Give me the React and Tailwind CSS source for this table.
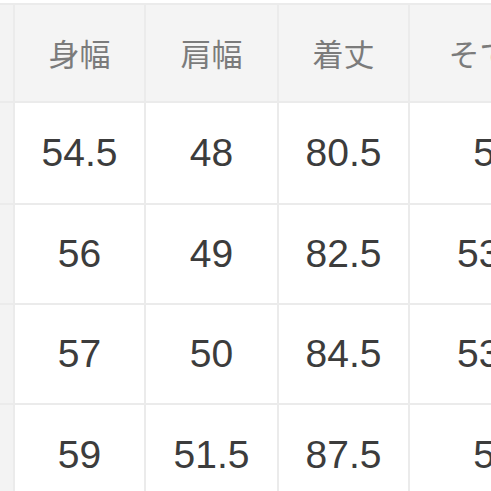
const headers = ['身幅', '肩幅', '着丈', 'そで丈'];
const rows = [
  ['54.5', '48', '80.5', '52'],
  ['56', '49', '82.5', '53.5'],
  ['57', '50', '84.5', '53.5'],
  ['59', '51.5', '87.5', '55'],
];

export default function App() {
  return (
    <div className="w-[491px] h-[491px] overflow-hidden bg-white pt-[3px]">
      <div
        className="grid w-[580px] gap-[2px] border-t-2 border-[#ebebeb] bg-[#ebebeb]"
        style={{ gridTemplateColumns: '13px 129px 131px 129px 170px', gridTemplateRows: '96px 100px 98px 98px 100px' }}
      >
        <div className="bg-[#f3f3f3]" />
        {headers.map(h => (
          <div
            key={h}
            className="flex items-center justify-center bg-[#f4f4f4] text-[31px] text-[#7b7b7b]"
            style={{ fontFamily: '"Noto Sans CJK JP", sans-serif' }}
          >
            {h}
          </div>
        ))}
        {rows.map((r, i) => (
          <>
            <div key={'s' + i} className="bg-[#f3f3f3]" />
            {r.map((v, j) => (
              <div
                key={i + '-' + j}
                className="flex items-center justify-center bg-white text-[39px] text-[#3c3c3c]"
                style={{ fontFamily: '"Liberation Sans", Arial, sans-serif' }}
              >
                {v}
              </div>
            ))}
          </>
        ))}
      </div>
    </div>
  );
}
